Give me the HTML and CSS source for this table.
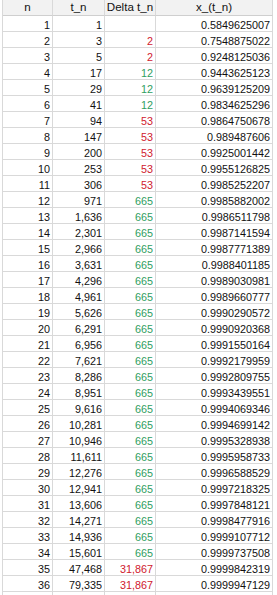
FILE: index.html
```html
<!DOCTYPE html>
<html>
<head>
<meta charset="utf-8">
<link rel="stylesheet" href="styles.css">
</head>
<body>
<div class="wrap">
<div class="sheet">
<div class="h">n</div><div class="h">t_n</div><div class="h">Delta t_n</div><div class="h">x_(t_n)</div>
<div class="c">1</div><div class="c">1</div><div class="c"></div><div class="c">0.5849625007</div>
<div class="c">2</div><div class="c">3</div><div class="c r">2</div><div class="c">0.7548875022</div>
<div class="c">3</div><div class="c">5</div><div class="c r">2</div><div class="c">0.9248125036</div>
<div class="c">4</div><div class="c">17</div><div class="c g">12</div><div class="c">0.9443625123</div>
<div class="c">5</div><div class="c">29</div><div class="c g">12</div><div class="c">0.9639125209</div>
<div class="c">6</div><div class="c">41</div><div class="c g">12</div><div class="c">0.9834625296</div>
<div class="c">7</div><div class="c">94</div><div class="c r">53</div><div class="c">0.9864750678</div>
<div class="c">8</div><div class="c">147</div><div class="c r">53</div><div class="c">0.989487606</div>
<div class="c">9</div><div class="c">200</div><div class="c r">53</div><div class="c">0.9925001442</div>
<div class="c">10</div><div class="c">253</div><div class="c r">53</div><div class="c">0.9955126825</div>
<div class="c">11</div><div class="c">306</div><div class="c r">53</div><div class="c">0.9985252207</div>
<div class="c">12</div><div class="c">971</div><div class="c g">665</div><div class="c">0.9985882002</div>
<div class="c">13</div><div class="c">1,636</div><div class="c g">665</div><div class="c">0.9986511798</div>
<div class="c">14</div><div class="c">2,301</div><div class="c g">665</div><div class="c">0.9987141594</div>
<div class="c">15</div><div class="c">2,966</div><div class="c g">665</div><div class="c">0.9987771389</div>
<div class="c">16</div><div class="c">3,631</div><div class="c g">665</div><div class="c">0.9988401185</div>
<div class="c">17</div><div class="c">4,296</div><div class="c g">665</div><div class="c">0.9989030981</div>
<div class="c">18</div><div class="c">4,961</div><div class="c g">665</div><div class="c">0.9989660777</div>
<div class="c">19</div><div class="c">5,626</div><div class="c g">665</div><div class="c">0.9990290572</div>
<div class="c">20</div><div class="c">6,291</div><div class="c g">665</div><div class="c">0.9990920368</div>
<div class="c">21</div><div class="c">6,956</div><div class="c g">665</div><div class="c">0.9991550164</div>
<div class="c">22</div><div class="c">7,621</div><div class="c g">665</div><div class="c">0.9992179959</div>
<div class="c">23</div><div class="c">8,286</div><div class="c g">665</div><div class="c">0.9992809755</div>
<div class="c">24</div><div class="c">8,951</div><div class="c g">665</div><div class="c">0.9993439551</div>
<div class="c">25</div><div class="c">9,616</div><div class="c g">665</div><div class="c">0.9994069346</div>
<div class="c">26</div><div class="c">10,281</div><div class="c g">665</div><div class="c">0.9994699142</div>
<div class="c">27</div><div class="c">10,946</div><div class="c g">665</div><div class="c">0.9995328938</div>
<div class="c">28</div><div class="c">11,611</div><div class="c g">665</div><div class="c">0.9995958733</div>
<div class="c">29</div><div class="c">12,276</div><div class="c g">665</div><div class="c">0.9996588529</div>
<div class="c">30</div><div class="c">12,941</div><div class="c g">665</div><div class="c">0.9997218325</div>
<div class="c">31</div><div class="c">13,606</div><div class="c g">665</div><div class="c">0.9997848121</div>
<div class="c">32</div><div class="c">14,271</div><div class="c g">665</div><div class="c">0.9998477916</div>
<div class="c">33</div><div class="c">14,936</div><div class="c g">665</div><div class="c">0.9999107712</div>
<div class="c">34</div><div class="c">15,601</div><div class="c g">665</div><div class="c">0.9999737508</div>
<div class="c">35</div><div class="c">47,468</div><div class="c r">31,867</div><div class="c">0.9999842319</div>
<div class="c">36</div><div class="c">79,335</div><div class="c r">31,867</div><div class="c">0.9999947129</div>
<div class="c"></div><div class="c"></div><div class="c"></div><div class="c"></div>
</div>
</div>
</body>
</html>
```
FILE: styles.css
```css
html, body {
  margin: 0;
  padding: 0;
  background: #ffffff;
}
.wrap {
  padding-left: 2px;
  height: 595px;
  overflow: hidden;
}
.sheet {
  display: grid;
  grid-template-columns: 50px 52px 51px 117px;
  border-left: 1px solid #d9d9d9;
  font-family: "Liberation Sans", Arial, sans-serif;
  font-size: 10.8px;
  color: #111111;
}
.h, .c {
  box-sizing: border-box;
  height: 16px;
  border-right: 1px solid #d9d9d9;
  border-bottom: 1px solid #d9d9d9;
  white-space: nowrap;
  overflow: hidden;
}
.h {
  background: #f2f2f2;
  border-bottom-color: #cfcfcf;
  text-align: center;
  font-size: 11.6px;
  line-height: 14px;
  padding-top: 0;
}
.c {
  text-align: right;
  line-height: 13px;
  padding-top: 3px;
  padding-right: 2px;
}
.r { color: #d0202e; }
.g { color: #2f9e5f; }
```
